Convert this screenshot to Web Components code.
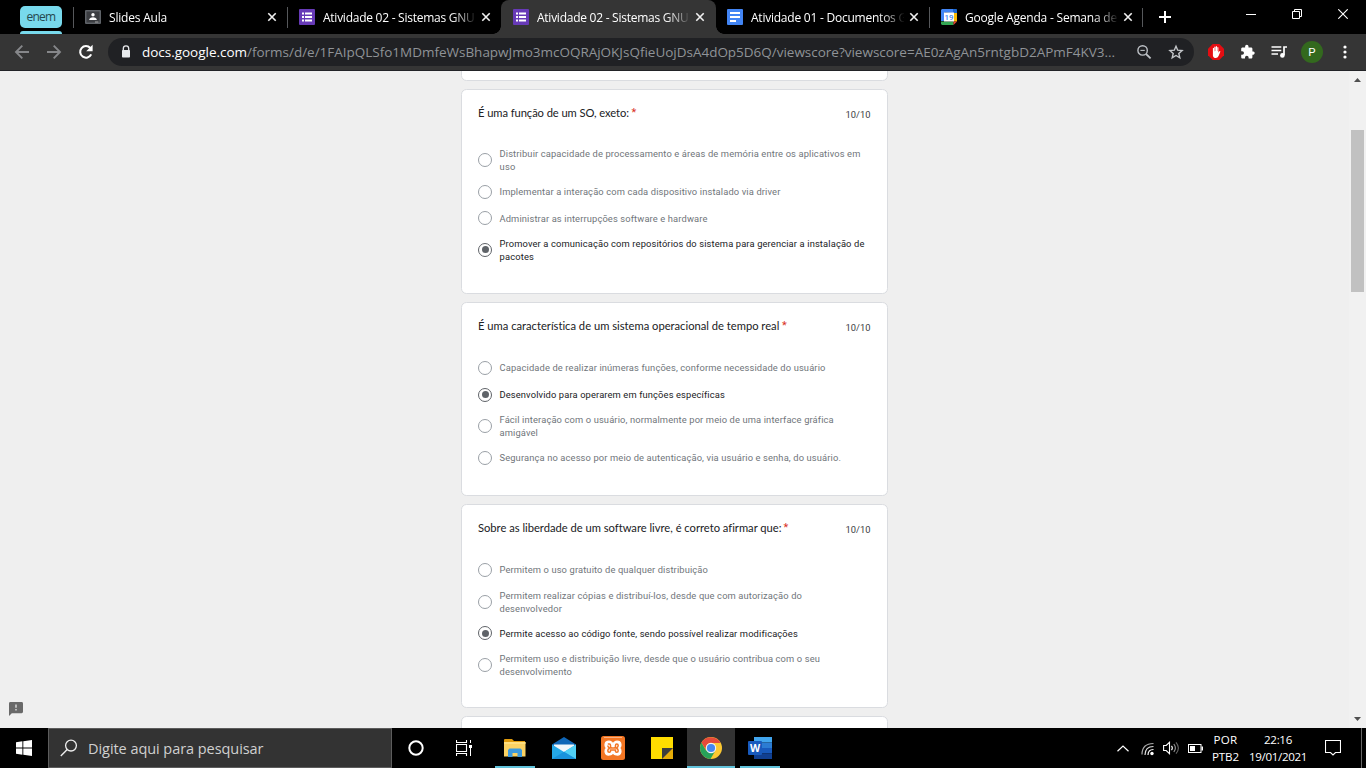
<!DOCTYPE html>
<html lang="pt-BR">
<head>
<meta charset="utf-8">
<title>Atividade 02 - Sistemas GNU</title>
<style>
html,body{margin:0;height:100%;overflow:hidden;background:#000}
body{font-family:"Open Sans","Noto Sans",sans-serif}
</style>
</head>
<body>
<desktop-screen></desktop-screen>
<script>
const define = (name, css, html, after) => customElements.define(name, class extends HTMLElement {
  connectedCallback() {
    if (this.shadowRoot) return;
    const root = this.attachShadow({ mode: 'open' });
    root.innerHTML = `<style>*{box-sizing:border-box}${css}</style>` + (typeof html === 'function' ? html(this) : html);
    if (after) after(this, root);
  }
});

const ICONS = {
  back: [16,16,'<path d="M15 8H2M8.3 1.7 2 8l6.3 6.3" fill="none" stroke="#86878a" stroke-width="1.9"/>'],
  forward: [16,16,'<path d="M1 8h13M7.7 1.7 14 8l-6.3 6.3" fill="none" stroke="#86878a" stroke-width="1.9"/>'],
  reload: [16,16,'<path d="M13.2 10.4A5.8 5.8 0 1 1 12.3 4" fill="none" stroke="#fff" stroke-width="2.1"/><path d="M14.6 .8v6.4H8.2z" fill="#fff"/>'],
  lock: [10,14,'<path d="M2.3 6V3.6a2.7 2.7 0 0 1 5.4 0V6" fill="none" stroke="#e8eaed" stroke-width="1.3"/><rect x="1" y="5" width="8" height="7.5" rx=".8" fill="#e8eaed"/>'],
  zoomout: [16,16,'<circle cx="6.6" cy="6.4" r="4.7" fill="none" stroke="#bdc1c6" stroke-width="1.4"/><path d="m10 10 4.6 4.4" stroke="#bdc1c6" stroke-width="1.8"/><path d="M4.4 6.4h4.4" stroke="#bdc1c6" stroke-width="1.1"/>'],
  star: [16,16,'<path d="m8 2.2 1.7 4 4.4.4-3.3 2.9 1 4.3L8 11.5l-3.8 2.3 1-4.3-3.3-2.9 4.4-.4z" fill="none" stroke="#c4c7ca" stroke-width="1.4"/>'],
  adblock: [16,16,'<path d="M4.7 0h6.6L16 4.7v6.6L11.3 16H4.7L0 11.3V4.7z" fill="#e40d12"/><path d="M4.9 8.9V4.3q.6-.9 1.1 0v3h.3V3q.6-1 1.2 0v4h.3V2.4q.6-.9 1.2 0V7h.3V3.4q.6-.8 1.1 0v5.4l.7-1.3q.7-.8 1.3-.1l-1.6 4.2q-.7 2.4-2.8 2.5-2.7 0-3.1-2.7z" fill="#fff"/>'],
  puzzle: [16,16,'<path d="M13.4 7.4h-1V4.7c0-.7-.6-1.3-1.3-1.3H8.5v-1a1.7 1.7 0 0 0-3.4 0v1H2.5c-.7 0-1.3.6-1.3 1.3v2.5h1a1.8 1.8 0 0 1 0 3.6h-1v2.5c0 .7.6 1.3 1.3 1.3H5v-1a1.8 1.8 0 0 1 3.6 0v1h2.5c.7 0 1.3-.6 1.3-1.3v-2.6h1a1.7 1.7 0 0 0 0-3.3z" fill="#fff"/>'],
  playlist: [17,14,'<path d="M.5 2h9.8M.5 5.5h9.8M.5 9H7" stroke="#fff" stroke-width="1.6"/><path d="M16 2h-3v8" fill="none" stroke="#fff" stroke-width="1.7"/><circle cx="11.4" cy="10.4" r="2.3" fill="#fff"/>'],
  dots: [4,16,'<g fill="#fff"><circle cx="2" cy="3" r="1.6"/><circle cx="2" cy="8" r="1.6"/><circle cx="2" cy="13" r="1.6"/></g>'],
  close: [10,10,'<path d="m1.3 1.3 7.4 7.4M8.7 1.3 1.3 8.7" stroke="#f1f1f1" stroke-width="1.6"/>'],
  plus: [12,12,'<path d="M6 0v12M0 6h12" stroke="#fff" stroke-width="2"/>'],
  minimize: [10,10,'<path d="M0 5.5h10" stroke="#fff"/>'],
  restore: [10,10,'<path d="M.5 2.5h7v7h-7zM2.5 2.5v-2h7v7h-2" fill="none" stroke="#fff"/>'],
  winclose: [10,10,'<path d="m.3.3 9.4 9.4M9.7.3.3 9.7" stroke="#fff" stroke-width="1.1"/>'],
  classroom: [16,16,'<rect y="1" width="16" height="14" rx="1" fill="#5f6368"/><rect x="1.5" y="2.5" width="13" height="11" fill="#3b3d41"/><circle cx="8" cy="5.7" r="1.7" fill="#fff"/><path d="M4.3 11V9.9q1-1.6 3.7-1.6t3.7 1.6V11z" fill="#fff"/><path d="M10 13h3.4" stroke="#aaa"/>'],
  forms: [16,16,'<rect width="16" height="16" rx="1" fill="#673ab7"/><path d="M3 4.5h2M6 4.5h7M3 8h2M6 8h7M3 11.5h2M6 11.5h7" stroke="#fff" stroke-width="1.9"/>'],
  docs: [16,16,'<rect width="16" height="16" rx="1" fill="#4285f4"/><path d="M3 4h10M3 8h10M3 12h6" stroke="#fff" stroke-width="1.9"/>'],
  calendar: [16,16,'<path d="M1 0h14l1 1v3h-4L3.5 3.5V12H0V1z" fill="#4285f4"/><path d="M12.5 4H16v8.5h-3.5z" fill="#fbbc04"/><path d="M0 12.5h12.5V16H1l-1-1z" fill="#34a853"/><path d="M12.5 12.5H16L12.5 16z" fill="#ea4335"/><path d="M12 0h3l1 1v3h-4z" fill="#1967d2"/><path d="M3 3.5h10v9H3z" fill="#fff"/><text x="8" y="10.8" text-anchor="middle" font-family="Roboto,sans-serif" font-weight="500" font-size="7.8" fill="#4285f4">19</text>'],
  feedback: [14,14,'<path d="M1.4 0h11.2A1.4 1.4 0 0 1 14 1.4v8.4a1.4 1.4 0 0 1-1.4 1.4H2.8L0 14V1.4A1.4 1.4 0 0 1 1.4 0z" fill="#696969"/><path d="M7 2.5v3.2M7 7v1.6" stroke="#ddd" stroke-width="1.4"/>'],
  windows: [16,16,'<path d="M0 2.2 6.4 1.3v6.2H0zM7.3 1.2 16 0v7.5H7.3zM0 8.4h6.4v6.3L0 13.8zM7.3 8.4H16V16l-8.7-1.2z" fill="#fff"/>'],
  search: [18,18,'<circle cx="11" cy="6.6" r="5.4" fill="none" stroke="#eee" stroke-width="1.3"/><path d="M7.2 10.6.8 17" stroke="#eee" stroke-width="1.4"/>'],
  cortana: [16,16,'<circle cx="8" cy="8" r="6.7" fill="none" stroke="#fff" stroke-width="2"/>'],
  taskview: [16,16,'<path d="M.5 0v2.5h10V0M.5 16v-2.5h10V16M.5 4.5h10v7H.5z" fill="none" stroke="#fff" stroke-width="1.1"/><path d="M14.5 0v3M14.5 8v8" stroke="#fff"/><rect x="13" y="5" width="3" height="3" fill="#fff"/>'],
  explorer: [22,20,'<path d="M0 2q0-1 1-1h7l2 2h11v15H0z" fill="#e09b0d"/><path d="M0 4h21.5v14.5H0z" fill="#fbd263"/><path d="M0 4h21.5v2H0z" fill="#ffdf80"/><path d="M4 19v-7l1.5-1.5h11L18 12v7h-4.5v-4h-5v4z" fill="#3d9ade"/>'],
  mail: [24,24,'<path d="M0 8.5 12 1l12 7.5-2 5H2z" fill="#0f66b7"/><path d="M2 8.5h20v5l-10 4-10-4z" fill="#f2f6fa"/><path d="M0 8.5 12 16l12-7.5V23H0z" fill="#24a8e8"/><path d="m12 16 12 7V8.5z" fill="#50d0f5"/><path d="M0 23 12 15.8 24 23z" fill="#1992dc"/>'],
  xampp: [24,24,'<rect width="24" height="24" rx="2.5" fill="#f37623"/><path d="M3 1.5h18" stroke="#f7b184"/><path d="M5 6q2-1.2 4.3-.7Q11.500 6 12 8.5q.5-2.5 2.7-3.2Q20 4.5 20 9q0 2-1.500 3 1.5 1 1.5 3.2 0 4.3-4.5 3.8-2.8-.3-3.5-3-.7 2.7-3.5 3Q4 19.500 4 15.200 4 13 5.500 12 4 11 4 9t1-3z" fill="#fff" stroke="#fff" stroke-width="1.2"/><path d="M6.800 8h1.700q1 0 1 1.300v1.200q0 1.500 1.500 1.500h2q1.500 0 1.500-1.500V9.300q0-1.300 1.200-1.300 1.500 0 1.500 1.500t-1.700 2.500q1.700 1 1.700 2.800 0 1.500-1.500 1.500t-1.200-2.300H9.500q.3 2.300-1.200 2.300t-1.500-1.500q0-1.800 1.700-2.800-1.700-1-1.700-2.500" fill="none" stroke="#f37623" stroke-width="1.500"/>'],
  sticky: [22,22,'<path d="M0 0h22v22H0z" fill="#fd0"/><path d="M11 11h11v11H11z" fill="#e7ad08"/><path d="M11 11h11L11 22z" fill="#3d3d3d"/>'],
  chrome: [22,22,'<circle cx="11" cy="11" r="11" fill="#fbc832"/><path d="M11 11 6.2 13.8 1.5 5.5A11 11 0 0 0 10.5 22l4.8-8.3z" fill="#27a25a"/><path d="M1.5 5.5A11 11 0 0 1 20.6 6H11a5 5 0 0 0-4.800 7.300z" fill="#e54a3b"/><circle cx="11" cy="11" r="5.2" fill="#f3f3f3"/><circle cx="11" cy="11" r="4.1" fill="#4587f2"/>'],
  word: [24,22,'<path d="M6 0h18v5.5H6z" fill="#41a5ee"/><path d="M6 5.5h18V11H6z" fill="#2b7cd3"/><path d="M6 11h18v5.5H6z" fill="#185abd"/><path d="M6 16.5h18V22H6z" fill="#103f91"/><rect y="4" width="14" height="14" rx="1" fill="#185abd"/><text x="7" y="14.8" text-anchor="middle" font-family="Open Sans,sans-serif" font-weight="700" font-size="10.5" fill="#fff">W</text>'],
  chevron: [12,7,'<path d="m.5 6.3 5.5-5.3 5.500 5.300" fill="none" stroke="#fff" stroke-width="1.2"/>'],
  wifi: [14,14,'<g fill="none" stroke-width="1.2"><path d="M1 12.5Q1 1.5 12.5 1.5" stroke="#aaa"/><path d="M4 13Q4 4.5 12.5 4.5" stroke="#ddd"/><path d="M7 13Q7 7.5 12.5 7.5" stroke="#fff"/></g><circle cx="11" cy="11.5" r="1.7" fill="#fff"/>'],
  volume: [17,14,'<path d="M.6 4.5h2.6L6.5 1.3v11.4L3.2 9.5H.6z" fill="none" stroke="#fff" stroke-width="1.1"/><g fill="none" stroke-width="1.1"><path d="M8.5 4.8q1.700 2.200 0 4.400" stroke="#fff"/><path d="M10.8 3q3.2 4 0 8" stroke="#999"/><path d="M13 1.3q4.8 5.7 0 11.4" stroke="#666"/></g>'],
  battery: [15,9,'<rect x=".5" y=".5" width="12.5" height="8" fill="none" stroke="#fff"/><path d="M2 2h5v5H2zM13.5 2.5H15v4h-1.500z" fill="#fff"/>'],
  notice: [16,16,'<path d="M.5.5h15v12h-5L8 15l-2.5-2.5h-5z" fill="none" stroke="#fff" stroke-width="1.1"/>'],
  up: [7,4,'<path d="M3.5 0 7 4H0z" fill="#505050"/>'],
  down: [7,4,'<path d="M3.5 4 7 0H0z" fill="#505050"/>']
};
define('ui-icon', ':host{display:block;flex:none}svg{display:block}', el => {
  const [w, h, art] = ICONS[el.getAttribute('name')];
  return `<svg width="${w}" height="${h}" viewBox="0 0 ${w} ${h}">${art}</svg>`;
});

/* One line of text, tracked so that it spans the given measure. */
define('text-line', ':host{display:block;white-space:nowrap;flex:none}span{display:inline-block;vertical-align:top}',
  '<span><slot></slot></span>', (el, root) => {
    const span = root.querySelector('span');
    const natural = span.getBoundingClientRect().width;
    const count = el.textContent.length;
    const target = parseFloat(el.getAttribute('measure'));
    if (target && count) {
      span.style.letterSpacing = (target - natural) / count + 'px';
      el.style.width = target + 'px';
    }
  });

define('browser-tab', `
:host{display:flex;align-items:center;width:214px;height:34px;padding-left:11px;flex:none;position:relative;color:#fff;font-size:12px;line-height:16px;border-left:1px solid transparent;border-image:linear-gradient(#0000 8px,#56585b 8px,#56585b 27px,#0000 27px) 1}
:host([plain]){border-image:none}
:host([active]){border-image:none;background:#353535;border-radius:8px 8px 0 0;width:215px;margin-right:-1px;z-index:1}
:host([active])::before,:host([active])::after{content:"";position:absolute;bottom:0;width:8px;height:8px}
:host([active])::before{left:-9px;background:radial-gradient(circle at 0 0,#0000 7.5px,#353535 8px)}
:host([active])::after{right:-8px;background:radial-gradient(circle at 100% 0,#0000 7.5px,#353535 8px)}
.label{margin-left:8px;padding-top:2px;width:153px;-webkit-mask:linear-gradient(90deg,#000 126px,#000a 140px,#0001 152px)}
.x{margin-left:5px}`,
  el => `<ui-icon name="${el.getAttribute('icon')}"></ui-icon><div class="label"><text-line measure="${el.getAttribute('measure')}">${el.getAttribute('label')}</text-line></div><ui-icon class="x" name="close"></ui-icon>`);

define('tab-strip', `
:host{display:flex;height:34px;background:#000;align-items:center}
.group{width:42px;height:34px;margin:0 11px 0 20px;padding-top:6px;display:flex;flex-direction:column;justify-content:space-between;flex:none}
.chip{height:22px;border-radius:5px;background:#78d9ec;color:#26494f;font-size:12px;line-height:21px;padding-left:6.5px}
.bar{height:3px;background:#78d9ec;border-radius:3px 3px 0 0}
.end{width:1px;height:19px;background:#56585b;margin:0 16px 0 -1px}
.win{margin-left:auto;display:flex;gap:36px;padding:0 18px 6px 0}`, `
<div class="group"><div class="chip"><text-line measure="29">enem</text-line></div><div class="bar"></div></div>
<browser-tab icon="classroom" label="Slides Aula" measure="58"></browser-tab>
<browser-tab icon="forms" label="Atividade 02 - Sistemas GNU" measure="151.5"></browser-tab>
<browser-tab active icon="forms" label="Atividade 02 - Sistemas GNU" measure="151.5"></browser-tab>
<browser-tab plain icon="docs" label="Atividade 01 - Documentos G" measure="156"></browser-tab>
<browser-tab icon="calendar" label="Google Agenda - Semana de" measure="152"></browser-tab>
<div class="end"></div><ui-icon name="plus"></ui-icon>
<div class="win"><ui-icon name="minimize"></ui-icon><ui-icon name="restore"></ui-icon><ui-icon name="winclose"></ui-icon></div>`);

define('address-bar', `
:host{display:flex;height:37px;background:#353535;border-bottom:1px solid #222327;align-items:center;padding-left:14px}
.nav{display:flex;gap:16px;width:94px;flex:none}
.box{display:flex;align-items:center;width:1086px;height:28px;border-radius:14px;background:#202124;padding-left:13px;flex:none;color:#8f9397;font-size:13.5px;line-height:18px}
.host{color:#fff;margin-left:11px}
.z{margin-left:21px}.s{margin-left:16px}
.ext{display:flex;align-items:center;margin-left:14px}
.avatar{width:22px;height:22px;border-radius:50%;background:#33691e;color:#fff;font:11.5px/22px Roboto,sans-serif;text-align:center;margin:0 20px 0 13px}`, `
<div class="nav"><ui-icon name="back"></ui-icon><ui-icon name="forward"></ui-icon><ui-icon name="reload"></ui-icon></div>
<div class="box"><ui-icon name="lock"></ui-icon><text-line class="host" measure="105">docs.google.com</text-line><text-line measure="868">/forms/d/e/1FAIpQLSfo1MDmfeWsBhapwJmo3mcOQRAjOKJsQfieUojDsA4dOp5D6Q/viewscore?viewscore=AE0zAgAn5rntgbD2APmF4KV3...</text-line><ui-icon class="z" name="zoomout"></ui-icon><ui-icon class="s" name="star"></ui-icon></div>
<div class="ext"><ui-icon name="adblock"></ui-icon><ui-icon name="puzzle" style="margin:0 15px 0 16px"></ui-icon><ui-icon name="playlist"></ui-icon><div class="avatar">P</div><ui-icon name="dots"></ui-icon></div>`);

define('answer-option', `
:host{display:flex;align-items:center;height:26.6px;font:9.33px/13px Roboto,sans-serif;color:#70757a}
:host([tall]){height:36.7px}
:host([checked]){color:#202124}
.radio{width:14px;height:14px;border-radius:50%;border:1.33px solid #9aa0a6;margin-right:7.5px;flex:none;display:grid;place-items:center}
:host([checked]) .radio{border-color:#5f6368}
:host([checked]) .radio::after{content:"";width:7px;height:7px;border-radius:50%;background:#5f6368}`,
  '<div class="radio"></div><div><slot></slot></div>');

define('question-card', `
:host{display:block;width:427px;background:#fff;border:1px solid #dadce0;border-radius:5.5px;box-sizing:border-box;flex:none;padding:14px 16px 0 16px}
header{display:flex;justify-content:space-between;height:37.65px;font:11.2px/18px Lato,sans-serif;color:#202124}
.title{display:flex;gap:2.5px}
.star{color:#d93025;font:11px/18px Roboto,sans-serif}
.score{font:9.33px/20px Roboto,sans-serif;color:#3c4043;padding-top:1px}`,
  el => el.hasAttribute('label') ? `<header><div class="title"><text-line measure="${el.getAttribute('measure')}">${el.getAttribute('label')}</text-line><span class="star">*</span></div><text-line class="score" measure="25">10/10</text-line></header><slot></slot>` : '');

const option = (state, ...lines) => `<answer-option ${state}>${lines.map(([w, t]) => `<text-line measure="${w}">${t}</text-line>`).join('')}</answer-option>`;

define('form-page', `
:host{display:flex;height:657px;background:#efefef;overflow:hidden;justify-content:space-between}
.left{width:461px;display:flex;align-items:flex-end;padding:0 0 12px 9px}
.cards{width:427px;display:flex;flex-direction:column;gap:8px}
.cards>:first-child{height:40px;margin-top:-30px}
question-card{padding-right:16.5px}
.right{width:478px;display:flex;justify-content:flex-end}
.bar{width:17px;background:#f1f1f1;display:flex;flex-direction:column;align-items:center;padding:7px 0 7px}
.thumb{width:13px;height:162px;background:#c1c1c1;margin:48px 0 auto}`, `
<div class="left"><ui-icon name="feedback"></ui-icon></div>
<div class="cards">
<question-card></question-card>
<question-card style="height:205px" label="É uma função de um SO, exeto:" measure="151">
${option('tall', [361, 'Distribuir capacidade de processamento e áreas de memória entre os aplicativos em'], [16, 'uso'])}
${option('', [281, 'Implementar a interação com cada dispositivo instalado via driver'])}
${option('', [208, 'Administrar as interrupções software e hardware'])}
${option('tall checked', [365, 'Promover a comunicação com repositórios do sistema para gerenciar a instalação de'], [34.5, 'pacotes'])}
</question-card>
<question-card style="height:194px" label="É uma característica de um sistema operacional de tempo real" measure="301.5">
${option('', [326, 'Capacidade de realizar inúmeras funções, conforme necessidade do usuário'])}
${option('checked', [225, 'Desenvolvido para operarem em funções específicas'])}
${option('tall', [334, 'Fácil interação com o usuário, normalmente por meio de uma interface gráfica'], [38.5, 'amigável'])}
${option('', [341.5, 'Segurança no acesso por meio de autenticação, via usuário e senha, do usuário.'])}
</question-card>
<question-card style="height:204px" label="Sobre as liberdade de um software livre, é correto afirmar que:" measure="303">
${option('', [208.5, 'Permitem o uso gratuito de qualquer distribuição'])}
${option('tall', [302.5, 'Permitem realizar cópias e distribuí-los, desde que com autorização do'], [62.5, 'desenvolvedor'])}
${option('checked', [298, 'Permite acesso ao código fonte, sendo possível realizar modificações'])}
${option('tall', [320.5, 'Permitem uso e distribuição livre, desde que o usuário contribua com o seu'], [72.5, 'desenvolvimento'])}
</question-card>
<question-card style="height:100px"></question-card>
</div>
<div class="right"><div class="bar"><ui-icon name="up"></ui-icon><div class="thumb"></div><ui-icon name="down"></ui-icon></div></div>`);

define('task-button', `
:host{display:grid;place-items:center;width:48px;height:40px;margin-right:1px;flex:none;box-sizing:border-box}
:host([running]){background:linear-gradient(#61c3db,#61c3db) 50% 100%/40px 2px no-repeat}
:host([current]){background:linear-gradient(#61c3db,#61c3db) 50% 100%/48px 2px no-repeat #333}`,
  el => `<ui-icon name="${el.getAttribute('icon')}"></ui-icon>`);

define('task-bar', `
:host{display:flex;height:40px;background:#000;color:#fff;align-items:center}
.start{width:48px;display:grid;place-items:center;flex:none}
.search{width:344px;height:40px;background:#333;border:1px solid #5c5c5c;display:flex;align-items:center;gap:10px;padding-left:11px;color:#d0d0d0;font-size:14.5px;line-height:20px;flex:none}
.search text-line{padding-top:1px}
.tray{margin-left:auto;display:flex;align-items:center;height:40px;font-size:11.6px;line-height:17px}
.pair{display:flex;flex-direction:column;align-items:center;padding-bottom:1px}
.edge{width:1px;height:40px;background:#666;margin:0 4px 0 20px}`, `
<div class="start"><ui-icon name="windows"></ui-icon></div>
<div class="search"><ui-icon name="search"></ui-icon><text-line measure="175.5">Digite aqui para pesquisar</text-line></div>
<task-button icon="cortana"></task-button><task-button icon="taskview" style="margin-right:2px;padding-right:2px"></task-button><task-button running icon="explorer"></task-button><task-button icon="mail"></task-button><task-button icon="xampp"></task-button><task-button icon="sticky"></task-button><task-button current icon="chrome"></task-button><task-button running icon="word"></task-button>
<div class="tray"><ui-icon name="chevron"></ui-icon><ui-icon name="wifi" style="margin:2px 8px 0 12px"></ui-icon><ui-icon name="volume"></ui-icon><ui-icon name="battery" style="margin:1px 9px 0 8px"></ui-icon>
<div class="pair"><text-line measure="24">POR</text-line><text-line measure="27">PTB2</text-line></div>
<div class="pair" style="margin:0 18px 0 10px"><text-line measure="28">22:16</text-line><text-line measure="58">19/01/2021</text-line></div>
<ui-icon name="notice"></ui-icon><div class="edge"></div></div>`);

define('desktop-screen', ':host{display:flex;flex-direction:column;width:1366px;height:768px;overflow:hidden}',
  '<tab-strip></tab-strip><address-bar></address-bar><form-page></form-page><task-bar></task-bar>');
</script>
</body>
</html>
